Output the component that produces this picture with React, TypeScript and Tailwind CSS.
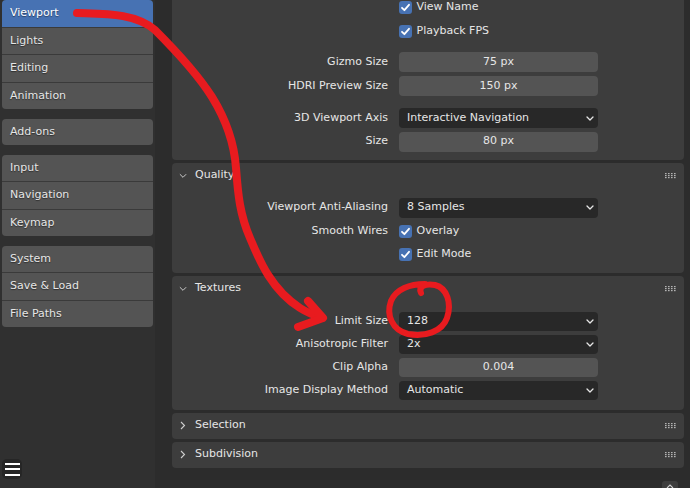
import React from 'react';

const font = { fontFamily: '"DejaVu Sans", "Liberation Sans", sans-serif' };

function SideGroup({ items, active }: { items: string[]; active?: string }) {
  return (
    <div className="flex flex-col gap-[1px] bg-[#3a3a3a] rounded-[4px] overflow-hidden w-[151px]">
      {items.map((item) => (
        <div
          key={item}
          className={`h-[26.5px] flex items-center pl-[8px] text-[11px] text-[#e6e6e6] [text-shadow:0_1px_1px_rgba(0,0,0,0.45)] ${
            item === active ? 'bg-[#4772b3] text-white' : 'bg-[#545454]'
          }`}
        >
          {item}
        </div>
      ))}
    </div>
  );
}

function Check({ label }: { label: string }) {
  return (
    <div className="flex items-center gap-[4.5px]">
      <div className="w-[13px] h-[13px] rounded-[3px] bg-[#4772b3] flex items-center justify-center">
        <svg width="11" height="11" viewBox="0 0 11 11">
          <polyline points="2,5.8 4.4,8.2 9,2.8" fill="none" stroke="white" strokeWidth="1.8" strokeLinecap="round" strokeLinejoin="round" />
        </svg>
      </div>
      <span className="text-[11px] text-[#e6e6e6]">{label}</span>
    </div>
  );
}

function Row({ label, children, className = '' }: { label?: string; children: React.ReactNode; className?: string }) {
  return (
    <div className={`flex items-center gap-[11px] h-[20px] ${className}`}>
      <div className="w-[216px] text-right text-[11px] text-[#e6e6e6] whitespace-nowrap">{label}</div>
      <div className="w-[199px] h-full flex items-center">{children}</div>
    </div>
  );
}

function NumField({ value }: { value: string }) {
  return (
    <div className="w-full h-full rounded-[4px] bg-[#545454] flex items-center justify-center text-[11px] text-[#e6e6e6]">
      {value}
    </div>
  );
}

function Dropdown({ value }: { value: string }) {
  return (
    <div className="w-full h-full rounded-[4px] bg-[#282828] flex items-center justify-between pl-[8px] pr-[4px] text-[11px] text-[#e6e6e6]">
      <span>{value}</span>
      <svg width="8" height="5" viewBox="0 0 8 5">
        <path d="M1 1 L4 4 L7 1" fill="none" stroke="#e6e6e6" strokeWidth="1.3" strokeLinecap="round" strokeLinejoin="round" />
      </svg>
    </div>
  );
}

function Grip() {
  return (
    <svg width="11" height="6" viewBox="0 0 11 6" className="opacity-70">
      {[0, 3, 6, 9].map((x) => [0, 2, 4].map((y) => <rect key={`${x}-${y}`} x={x} y={y} width="1.6" height="1.2" fill="#e6e6e6" />))}
    </svg>
  );
}

function Header({ title, open }: { title: string; open: boolean }) {
  return (
    <div className="h-[26px] flex items-center pl-[7px] pr-[8px]">
      <div className="w-[8px] flex justify-center">
        {open ? (
          <svg width="9" height="6" viewBox="0 0 9 6">
            <path d="M1 1 L4.5 4.5 L8 1" fill="none" stroke="#cfcfcf" strokeWidth="1.1" />
          </svg>
        ) : (
          <svg width="6" height="9" viewBox="0 0 6 9">
            <path d="M1 1 L4.5 4.5 L1 8" fill="none" stroke="#cfcfcf" strokeWidth="1.1" />
          </svg>
        )}
      </div>
      <span className="ml-[8px] text-[11px] text-[#e6e6e6] flex-1">{title}</span>
      <Grip />
    </div>
  );
}

export default function App() {
  return (
    <div className="relative w-[690px] h-[488px] overflow-hidden bg-[#2c2c2c] flex" style={font}>
      <div className="w-[155px] bg-[#303030] flex flex-col pl-[2px] gap-[9.5px]">
        <SideGroup items={['Viewport', 'Lights', 'Editing', 'Animation']} active="Viewport" />
        <SideGroup items={['Add-ons']} />
        <SideGroup items={['Input', 'Navigation', 'Keymap']} />
        <SideGroup items={['System', 'Save & Load', 'File Paths']} />
        <div className="mt-auto mb-[9px] w-[20px] h-[20px] rounded-[5px] bg-[#262626] flex flex-col items-center justify-center gap-[3.5px]">
          <div className="w-[15px] h-[2px] bg-white" />
          <div className="w-[15px] h-[2px] bg-white" />
          <div className="w-[15px] h-[2px] bg-white" />
        </div>
      </div>

      <div className="flex-1 pl-[17px] pr-[6px] flex flex-col gap-[3px]">
        <div className="-mt-[10px] pt-[7.5px] pb-[8px] bg-[#3d3d3d] rounded-[4px]">
          <Row><Check label="View Name" /></Row>
          <Row className="mt-[3.5px]"><Check label="Playback FPS" /></Row>
          <Row label="Gizmo Size" className="mt-[11px]"><NumField value="75 px" /></Row>
          <Row label="HDRI Preview Size" className="mt-[4px]"><NumField value="150 px" /></Row>
          <Row label="3D Viewport Axis" className="mt-[12px]"><Dropdown value="Interactive Navigation" /></Row>
          <Row label="Size" className="mt-[3.5px]"><NumField value="80 px" /></Row>
        </div>

        <div className="bg-[#3d3d3d] rounded-[4px] pb-[8px]">
          <Header title="Quality" open />
          <Row label="Viewport Anti-Aliasing" className="mt-[9px]"><Dropdown value="8 Samples" /></Row>
          <Row label="Smooth Wires" className="mt-[4px]"><Check label="Overlay" /></Row>
          <Row className="mt-[3px]"><Check label="Edit Mode" /></Row>
        </div>

        <div className="bg-[#3d3d3d] rounded-[4px] pb-[9.5px]">
          <Header title="Textures" open />
          <Row label="Limit Size" className="mt-[10px] !h-[19.5px]"><Dropdown value="128" /></Row>
          <Row label="Anisotropic Filter" className="mt-[3.5px] !h-[19.5px]"><Dropdown value="2x" /></Row>
          <Row label="Clip Alpha" className="mt-[3.5px] !h-[19.5px]"><NumField value="0.004" /></Row>
          <Row label="Image Display Method" className="mt-[3.5px] !h-[19.5px]"><Dropdown value="Automatic" /></Row>
        </div>

        <div className="bg-[#3d3d3d] rounded-[4px]">
          <Header title="Selection" open={false} />
        </div>
        <div className="bg-[#3d3d3d] rounded-[4px]">
          <Header title="Subdivision" open={false} />
        </div>
      </div>

      <div className="absolute left-[662px] top-[481px] w-[16px] h-[14px] rounded-[3px] bg-[#3d3d3d] flex justify-center pt-[3px]">
        <svg width="8" height="5" viewBox="0 0 8 5">
          <path d="M1 4 L4 1 L7 4" fill="none" stroke="#cfcfcf" strokeWidth="1.1" />
        </svg>
      </div>

      <svg className="absolute inset-0 pointer-events-none" width="690" height="488" viewBox="0 0 690 488">
        <g fill="none" stroke="#e81b1f" strokeLinecap="round" strokeLinejoin="round">
          <path
            strokeWidth="8"
            d="M77 13 C 105 14, 135 13, 155 30 C 175 50, 200 78, 212 97 C 225 118, 234 140, 236 168 C 238 195, 240 215, 250 238 C 260 262, 272 290, 300 308 C 308 313, 316 316, 322 318"
          />
          <path strokeWidth="8" d="M308 301 L323 318 L298 327" />
          <path
            strokeWidth="6"
            d="M421 293 C 418 287, 425 283, 435 285 C 447 288, 452 303, 447 318 C 442 332, 425 337, 408 334 C 392 330, 386 315, 391 301 C 396 289, 410 284, 425 284"
          />
        </g>
      </svg>
    </div>
  );
}
